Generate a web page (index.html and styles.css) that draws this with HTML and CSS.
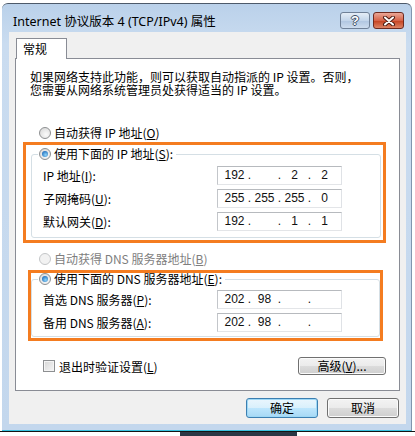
FILE: index.html
```html
<!DOCTYPE html>
<html>
<head>
  <meta charset="UTF-8">
  <title>Internet 协议版本 4 (TCP/IPv4) 属性</title>
  <link rel="stylesheet" href="styles.css">
</head>
<body>
  <div class="window">
    <div class="titlebar">
      <span class="title">Internet 协议版本 4 (TCP/IPv4) 属性</span>
      <div class="caption-btns">
        <span class="cap-btn help">?</span>
        <span class="cap-btn close">
          <svg width="14" height="10" viewBox="0 0 14 10">
            <path d="M3 1.5 L11 8.5 M11 1.5 L3 8.5" stroke="#4a1c14" stroke-width="4" stroke-linecap="round"/>
            <path d="M3 1.5 L11 8.5 M11 1.5 L3 8.5" stroke="#fff" stroke-width="2" stroke-linecap="round"/>
          </svg>
        </span>
      </div>
    </div>
    <div class="client">
      <div class="tabs"><span class="tab">常规</span></div>
      <div class="panel">
        <p class="desc">如果网络支持此功能，则可以获取自动指派的 IP 设置。否则，<br>您需要从网络系统管理员处获得适当的 IP 设置。</p>

        <div class="option first"><span class="radio"></span>自动获得 IP 地址(<u>O</u>)</div>

        <div class="mark mark-ip">
          <div class="group">
            <div class="legend"><span class="radio on"></span>使用下面的 IP 地址(<u>S</u>):</div>
            <div class="rows">
              <div class="row">
                <span class="lbl">IP 地址(<u>I</u>):</span>
                <div class="ipbox"><span>192</span><i>.</i><span></span><i>.</i><span>2</span><i>.</i><span>2</span></div>
              </div>
              <div class="row">
                <span class="lbl">子网掩码(<u>U</u>):</span>
                <div class="ipbox"><span>255</span><i>.</i><span>255</span><i>.</i><span>255</span><i>.</i><span>0</span></div>
              </div>
              <div class="row">
                <span class="lbl">默认网关(<u>D</u>):</span>
                <div class="ipbox"><span>192</span><i>.</i><span></span><i>.</i><span>1</span><i>.</i><span>1</span></div>
              </div>
            </div>
          </div>
        </div>

        <div class="option disabled"><span class="radio off"></span>自动获得 DNS 服务器地址(<u>B</u>)</div>

        <div class="mark mark-dns">
          <div class="group">
            <div class="legend"><span class="radio on"></span>使用下面的 DNS 服务器地址(<u>E</u>):</div>
            <div class="rows">
              <div class="row">
                <span class="lbl">首选 DNS 服务器(<u>P</u>):</span>
                <div class="ipbox"><span>202</span><i>.</i><span>98</span><i>.</i><span></span><i>.</i><span></span></div>
              </div>
              <div class="row">
                <span class="lbl">备用 DNS 服务器(<u>A</u>):</span>
                <div class="ipbox"><span>202</span><i>.</i><span>98</span><i>.</i><span></span><i>.</i><span></span></div>
              </div>
            </div>
          </div>
        </div>

        <div class="bottom-row">
          <div class="check-opt"><span class="checkbox"></span>退出时验证设置(<u>L</u>)</div>
          <button class="btn advanced">高级(<u>V</u>)...</button>
        </div>
      </div>
      <div class="actions">
        <button class="btn default">确定</button>
        <button class="btn">取消</button>
      </div>
    </div>
  </div>
  <div class="desk"><span class="task"></span></div>
</body>
</html>
```

FILE: styles.css
```css
body {
  margin: 0;
  background: #fff;
  font-family: "Noto Sans CJK SC", sans-serif;
  font-size: 12px;
  color: #000;
}
.window {
  box-sizing: border-box;
  width: 410px;
  height: 428px;
  margin: 3px 0 0 2px;
  background: linear-gradient(#bad1ea, #cadcf0 40px, #c3d7ed);
  border-top: 1px solid #4d5a6a;
  border-right: 1px solid #8196ae;
  border-bottom: 1px solid #38c2df;
  border-radius: 6px 6px 0 0;
  display: flex;
  flex-direction: column;
}
.titlebar {
  height: 28px;
  display: flex;
  padding: 0 7px 0 11px;
}
.title {
  margin-top: 10px;
  line-height: 16px;
  font-family: "Noto Sans", "Noto Sans CJK SC", sans-serif;
  font-size: 12.5px;
  color: #000;
}
.caption-btns {
  margin-left: auto;
  margin-top: 8px;
  display: flex;
  gap: 3px;
}
.cap-btn {
  box-sizing: border-box;
  height: 17px;
  border-radius: 3px;
  display: flex;
  align-items: center;
  justify-content: center;
}
.help {
  width: 30px;
  border: 1px solid #6f8097;
  background: linear-gradient(#e4edf7, #c3d5ea 50%, #afc5e0 51%, #cddcee);
  color: #fff;
  font-family: "Liberation Sans", sans-serif;
  font-weight: bold;
  font-size: 13px;
  text-shadow: 1px 0 #3f4f66, -1px 0 #3f4f66, 0 1px #3f4f66, 0 -1px #3f4f66;
}
.close {
  width: 31px;
  border: 1px solid #6e2a20;
  background: linear-gradient(#eaa797, #d66349 50%, #c4401f 51%, #dd8466);
}
.client {
  height: 392px;
  margin: 0 5px 0 7px;
  background: #f0f0f0;
  padding: 6px 0 0 6px;
  box-sizing: border-box;
}
.tabs {
  display: flex;
}
.tab {
  position: relative;
  z-index: 1;
  box-sizing: border-box;
  width: 51px;
  height: 21px;
  margin: 0 0 -1px 1px;
  padding-left: 6px;
  line-height: 20px;
  background: #fff;
  border: 1px solid #898c95;
  border-bottom: none;
}
.panel {
  box-sizing: border-box;
  width: 385px;
  height: 333px;
  background: #fff;
  border: 1px solid #898c95;
}
.desc {
  margin: 11px 0 0 14px;
  line-height: 13px;
}
.option {
  display: flex;
  align-items: center;
  line-height: 16px;
  padding-left: 23px;
}
.option.first {
  margin-top: 29px;
}
.option.disabled {
  margin-top: 8px;
  color: #7e7e7e;
}
.radio {
  box-sizing: border-box;
  width: 12px;
  height: 12px;
  margin-right: 3px;
  border-radius: 50%;
  border: 1px solid #8d8f91;
  background: radial-gradient(circle at 60% 65%, #fbfbfb, #dcdcdc 80%);
  display: inline-flex;
  align-items: center;
  justify-content: center;
}
.radio.on::after {
  content: "";
  width: 6px;
  height: 6px;
  border-radius: 50%;
  background: radial-gradient(circle at 60% 65%, #8fd4f7, #2a78c4 70%, #14457c);
}
.radio.off {
  border-color: #c4c6c8;
  background: #f2f2f2;
}
.mark {
  border: 3px solid #f47c20;
}
.mark-ip {
  margin: 1px 13px 0 7px;
}
.mark-dns {
  margin: 3px 16px 0 12px;
}
.group {
  border: 1px solid #d5dfe5;
  border-radius: 3px;
}
.mark-ip .group {
  margin: 9px 2px 2px 5px;
  padding-bottom: 6px;
}
.mark-dns .group {
  margin: 6px 0 1px 0;
  padding-bottom: 4px;
}
.legend {
  display: flex;
  align-items: center;
  width: fit-content;
  margin: -7px 0 0 6px;
  padding: 0 3px 0 1px;
  line-height: 12px;
  background: #fff;
}
.rows {
  display: flex;
  flex-direction: column;
  gap: 4px;
}
.mark-ip .rows {
  margin-top: 6px;
}
.mark-dns .rows {
  margin-top: 5px;
}
.row {
  display: flex;
  align-items: center;
}
.lbl {
  box-sizing: border-box;
  width: 185px;
  padding-left: 11px;
}
.ipbox {
  box-sizing: border-box;
  width: 125px;
  height: 19px;
  padding-left: 4px;
  border: 1px solid;
  border-color: #b7babe #dfe2e6 #e3e5e8 #c3c6ca;
  display: flex;
  font-family: "Liberation Sans", sans-serif;
  font-size: 12px;
  line-height: 17px;
  color: #111;
}
.ipbox span {
  width: 25px;
  text-align: center;
}
.ipbox i {
  width: 5px;
  font-style: normal;
  text-align: center;
}
.bottom-row {
  margin-top: 16px;
  display: flex;
  align-items: center;
  justify-content: space-between;
  height: 18px;
}
.check-opt {
  display: flex;
  align-items: center;
  margin-left: 27px;
}
.checkbox {
  box-sizing: border-box;
  width: 12px;
  height: 12px;
  margin-right: 4px;
  border: 1px solid #8d8f91;
  background: linear-gradient(135deg, #d6d6d6, #f6f6f6);
  box-shadow: inset 0 0 0 1px #f4f4f4;
}
.btn {
  box-sizing: border-box;
  height: 20px;
  width: 72px;
  padding: 0;
  font-family: "Noto Sans CJK SC", sans-serif;
  font-size: 12px;
  line-height: 16px;
  color: #000;
  border: 1px solid #707070;
  border-radius: 3px;
  background: linear-gradient(#f3f3f3, #ebebeb 49%, #dcdcdc 50%, #cfcfcf);
  box-shadow: inset 0 0 0 1px #fbfbfb;
}
.btn.advanced {
  width: 88px;
  height: 18px;
  margin-right: 13px;
}
.btn.default {
  border-color: #3c7fb1;
  background: linear-gradient(#eaf6fd, #d9f0fc 49%, #bee6fd 50%, #a7d9f5);
  box-shadow: inset 0 0 0 1px #9ed8f6;
}
.actions {
  margin-top: 7px;
  padding-right: 7px;
  display: flex;
  justify-content: flex-end;
  gap: 9px;
}
.desk {
  height: 4px;
  border-top: 1px solid #141414;
  display: flex;
}
.task {
  width: 117px;
  margin-left: 180px;
  background: #2b3744;
}
```
